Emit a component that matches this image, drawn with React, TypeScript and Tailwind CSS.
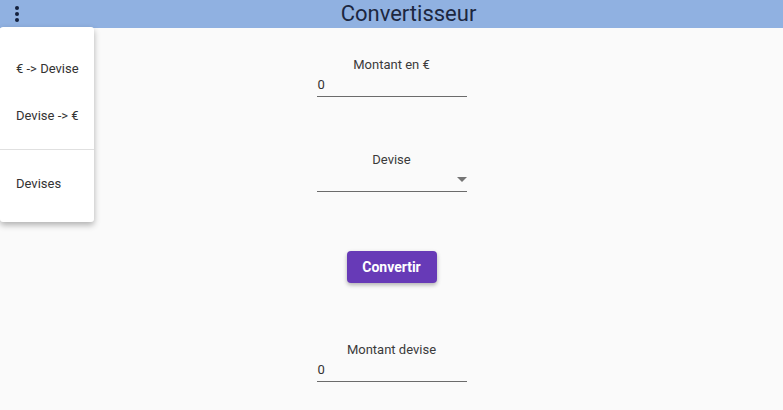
const Field = ({ label, value, select }: { label: string; value?: string; select?: boolean }) => {
  return (
    <div className="w-[150px]">
      <div className="text-center text-[13px] leading-[18px] text-[#3a3a3a]">{label}</div>
      <div className="relative h-[23px] border-b border-[#6b6b6b] pl-[1px] text-[13px] leading-[22px] text-[#333]">
        {value}
        {select && (
          <span className="absolute right-[0px] top-[8px] h-0 w-0 border-x-[5px] border-t-[5px] border-x-transparent border-t-[#757575]" />
        )}
      </div>
    </div>
  );
};

export default function App() {
  return (
    <div className="relative h-[410px] w-[783px] overflow-hidden bg-[#fafafa] font-['Roboto',sans-serif]">
      {/* Top bar */}
      <header className="relative flex h-[28px] items-center justify-center bg-[#90b1e1] pl-[34px]">
        <div className="absolute left-[15px] top-[6px] flex flex-col gap-[2px]">
          <span className="h-[4px] w-[4px] rounded-full bg-[#14213d]" />
          <span className="h-[4px] w-[4px] rounded-full bg-[#14213d]" />
          <span className="h-[4px] w-[4px] rounded-full bg-[#14213d]" />
        </div>
        <h1 className="text-[22px] leading-[28px] text-[#1c2740]">Convertisseur</h1>
      </header>

      {/* Form */}
      <main className="flex flex-col items-center pt-[28px]">
        <Field label="Montant en €" value="0" />
        <div className="mt-[54px]">
          <Field label="Devise" select />
        </div>
        <button className="mt-[59px] h-[32px] w-[90px] rounded-[4px] bg-[#673ab7] text-[14px] font-bold text-white shadow-[0_2px_4px_rgba(0,0,0,0.3)]">
          Convertir
        </button>
        <div className="mt-[58px]">
          <Field label="Montant devise" value="0" />
        </div>
      </main>

      {/* Menu */}
      <div className="absolute left-0 top-[27px] w-[94px] rounded-[3px] bg-white pb-[15px] pt-[18px] text-[13px] text-[#333] shadow-[0_3px_6px_rgba(0,0,0,0.3)]">
        <div className="flex h-[47px] items-center pl-[16px]">€ -&gt; Devise</div>
        <div className="flex h-[47px] items-center pl-[16px]">Devise -&gt; €</div>
        <div className="my-[10px] h-px bg-[#e0e0e0]" />
        <div className="flex h-[47px] items-center pl-[16px]">Devises</div>
      </div>
    </div>
  );
}
